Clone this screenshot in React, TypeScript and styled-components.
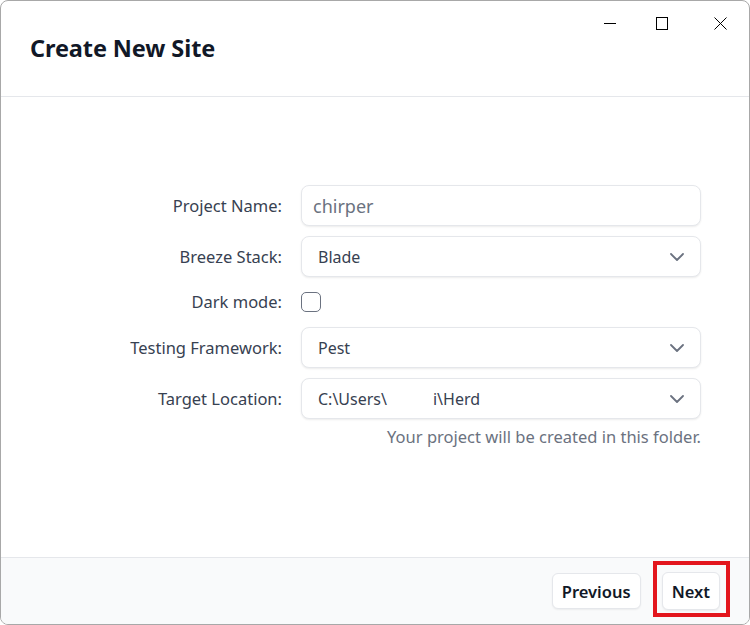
import React from "react";
import styled, { createGlobalStyle } from "styled-components";

const Global = createGlobalStyle`
  html, body { margin: 0; padding: 0; background: #ffffff; }
  body { font-family: "Noto Sans", "Open Sans", sans-serif; }
  * { box-sizing: border-box; }
`;

const Window = styled.div`
  position: relative;
  width: 750px;
  height: 625px;
  border: 1px solid #a8a8a8;
  border-radius: 8px;
  overflow: hidden;
  background: #ffffff;
  display: flex;
  flex-direction: column;
`;

const Header = styled.header`
  height: 96px;
  flex: none;
  border-bottom: 1px solid #e5e7eb;
  display: flex;
  flex-direction: column;
`;

const ControlRow = styled.div`
  display: flex;
  justify-content: flex-end;
  align-items: center;
  padding: 16px 22px 0 0;
  height: 28px;
`;

const Control = styled.span<{ $gap: number }>`
  display: inline-flex;
  width: 13px;
  height: 13px;
  margin-left: ${(p) => p.$gap}px;
`;

const Title = styled.h1`
  margin: 3px 0 0 29px;
  font-size: 23.5px;
  line-height: 32px;
  font-weight: 700;
  color: #111827;
  letter-spacing: -0.1px;
`;

const Body = styled.main`
  flex: 1;
  padding: 88px 48px 0 0;
`;

const Form = styled.div`
  display: grid;
  grid-template-columns: 1fr 400px;
  column-gap: 19px;
  row-gap: 10px;
  align-items: center;
`;

const Label = styled.label`
  text-align: right;
  font-size: 16.5px;
  color: #374151;
  line-height: 20px;
`;

const Field = styled.div<{ $big?: boolean }>`
  height: 41px;
  border: 1px solid #e5e7eb;
  border-radius: 8px;
  box-shadow: 0 1px 2px rgba(0, 0, 0, 0.08);
  background: #fff;
  display: flex;
  align-items: center;
  justify-content: space-between;
  padding: 0 16px 0 ${(p) => (p.$big ? 11 : 16)}px;
  font-size: ${(p) => (p.$big ? 18 : 16)}px;
  color: ${(p) => (p.$big ? "#6b7280" : "#374151")};
`;

const CheckCell = styled.div`
  height: 30px;
  display: flex;
  align-items: center;
`;

const Checkbox = styled.span`
  width: 20px;
  height: 20px;
  border: 1.5px solid #6b7280;
  border-radius: 5px;
  background: #fff;
`;

const Gap = styled.span`
  display: inline-block;
  width: 46px;
`;

const Help = styled.div`
  grid-column: 2;
  text-align: right;
  font-size: 16.5px;
  line-height: 18px;
  margin-top: -1px;
  color: #6b7280;
`;

const Footer = styled.footer`
  height: 67px;
  flex: none;
  border-top: 1px solid #e5e7eb;
  background: #f9fafb;
  display: flex;
  justify-content: flex-end;
  align-items: center;
  gap: 21px;
  padding: 0 29px 0 0;
`;

const Button = styled.button<{ $tall?: boolean }>`
  position: relative;
  font-family: inherit;
  font-size: 16.5px;
  font-weight: 600;
  color: #111827;
  background: #fff;
  border: 1px solid #e5e7eb;
  border-radius: 6px;
  box-shadow: 0 1px 2px rgba(0, 0, 0, 0.06);
  height: ${(p) => (p.$tall ? 38 : 36)}px;
  padding: 0 9px;
`;

const Highlight = styled.span`
  position: absolute;
  left: -10px;
  right: -11px;
  top: -12px;
  bottom: -8px;
  border: 4px solid #e3161d;
  pointer-events: none;
`;

const Chevron = () => (
  <svg width="14" height="8" viewBox="0 0 14 8" fill="none">
    <path d="M1 1l6 6 6-6" stroke="#6b7280" strokeWidth="1.8" strokeLinecap="round" strokeLinejoin="round" />
  </svg>
);

export default function App() {
  return (
    <>
      <Global />
      <Window>
        <Header>
          <ControlRow>
            <Control $gap={0}>
              <svg width="13" height="13" viewBox="0 0 13 13">
                <path d="M0 6.5h12" stroke="#000" strokeWidth="1" />
              </svg>
            </Control>
            <Control $gap={39}>
              <svg width="13" height="13" viewBox="0 0 13 13">
                <rect x="0.5" y="0.5" width="11" height="12" fill="none" stroke="#000" strokeWidth="1" />
              </svg>
            </Control>
            <Control $gap={45}>
              <svg width="13" height="13" viewBox="0 0 13 13">
                <path d="M0.5 0.5l12 12M12.5 0.5l-12 12" stroke="#000" strokeWidth="1" />
              </svg>
            </Control>
          </ControlRow>
          <Title>Create New Site</Title>
        </Header>
        <Body>
          <Form>
            <Label>Project Name:</Label>
            <Field $big>chirper</Field>
            <Label>Breeze Stack:</Label>
            <Field>
              Blade
              <Chevron />
            </Field>
            <Label>Dark mode:</Label>
            <CheckCell>
              <Checkbox />
            </CheckCell>
            <Label>Testing Framework:</Label>
            <Field>
              Pest
              <Chevron />
            </Field>
            <Label>Target Location:</Label>
            <Field>
              <span>
                C:\Users\<Gap />i\Herd
              </span>
              <Chevron />
            </Field>
            <Help>Your project will be created in this folder.</Help>
          </Form>
        </Body>
        <Footer>
          <Button>Previous</Button>
          <Button $tall>
            Next
            <Highlight />
          </Button>
        </Footer>
      </Window>
    </>
  );
}
